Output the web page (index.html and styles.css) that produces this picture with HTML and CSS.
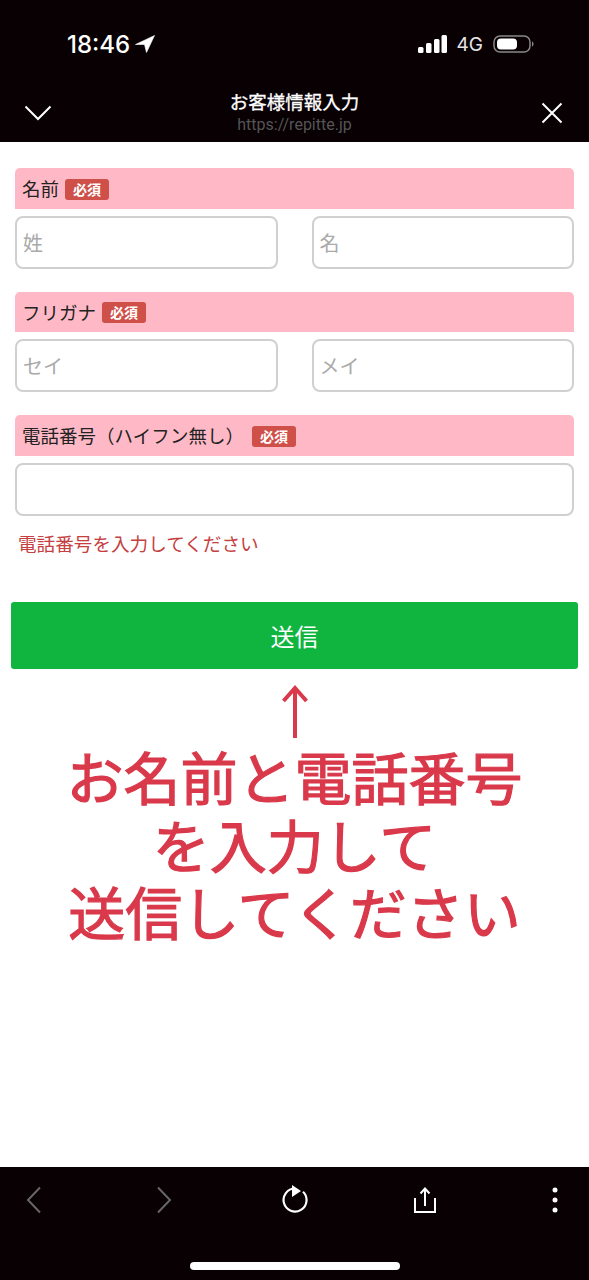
FILE: index.html
```html
<!DOCTYPE html>
<html lang="ja">
<head>
  <meta charset="UTF-8">
  <meta name="viewport" content="width=device-width, initial-scale=1.0">
  <title>お客様情報入力</title>
  <link rel="stylesheet" href="styles.css">
</head>
<body>
  <div class="app">
    <header class="top">
      <div class="status">
        <div class="clock">
          <span>18:46</span>
          <svg width="20" height="18" viewBox="0 0 20 18"><path d="M19.500.5.500 9.500h9l2 8z" fill="#fff" stroke="#fff" stroke-width=".6"/></svg>
        </div>
        <div class="indicators">
          <svg width="29" height="18" viewBox="0 0 29 18" fill="#fff">
            <rect x="0" y="12" width="5.500" height="6" rx="1.500"/>
            <rect x="8" y="8" width="5.500" height="10" rx="1.500"/>
            <rect x="16" y="4" width="5.500" height="14" rx="1.500"/>
            <rect x="23.500" y="0" width="5.500" height="18" rx="1.500"/>
          </svg>
          <span class="network">4G</span>
          <svg width="42" height="18" viewBox="0 0 42 18">
            <rect x="1" y="1" width="36" height="16" rx="6" fill="none" stroke="#888" stroke-width="1.500"/>
            <rect x="4" y="3.500" width="20" height="11" rx="4" fill="#fff"/>
            <path d="M39 6.500c2 .5 2 4.500 0 5z" fill="#888"/>
          </svg>
        </div>
      </div>
      <div class="nav">
        <svg class="nav-down" width="28" height="16" viewBox="0 0 28 16"><path d="M1.500 1.500 14 14 26.500 1.500" fill="none" stroke="#fff" stroke-width="2"/></svg>
        <div class="nav-title">
          <div class="title">お客様情報入力</div>
          <div class="url">https://repitte.jp</div>
        </div>
        <svg class="nav-close" width="22" height="22" viewBox="0 0 22 22"><path d="M1.500 1.500l19 19M20.500 1.500l-19 19" fill="none" stroke="#fff" stroke-width="2"/></svg>
      </div>
    </header>

    <main class="content">
      <form class="form">
        <div class="field">
          <div class="label">名前<span class="req">必須</span></div>
          <div class="two">
            <input class="input" type="text" placeholder="姓">
            <input class="input" type="text" placeholder="名">
          </div>
        </div>
        <div class="field">
          <div class="label">フリガナ<span class="req">必須</span></div>
          <div class="two">
            <input class="input" type="text" placeholder="セイ">
            <input class="input" type="text" placeholder="メイ">
          </div>
        </div>
        <div class="field">
          <div class="label">電話番号（ハイフン無し）<span class="req req-far">必須</span></div>
          <input class="input" type="tel">
          <p class="error">電話番号を入力してください</p>
        </div>
        <button class="send" type="button">送信</button>
      </form>

      <div class="note">
        <svg class="note-arrow" width="30" height="54" viewBox="0 0 30 54"><path d="M15 53V3M3.500 16 15 3l11.500 13" fill="none" stroke="#d9394a" stroke-width="4"/></svg>
        <p class="note-text">お名前と電話番号<br>を入力して<br>送信してください</p>
      </div>
    </main>

    <footer class="bottom">
      <div class="tools">
        <span class="tool"><svg width="16" height="28" viewBox="0 0 16 28"><path d="M14 1.500 2 14l12 12.500" fill="none" stroke="#666" stroke-width="2"/></svg></span>
        <span class="tool"><svg width="16" height="28" viewBox="0 0 16 28"><path d="M2 1.500 14 14 2 26.500" fill="none" stroke="#666" stroke-width="2"/></svg></span>
        <span class="tool"><svg width="26" height="30" viewBox="0 0 26 30">
          <path d="M13 3.500A11.500 11.500 0 1 0 21 6.700" fill="none" stroke="#fff" stroke-width="2.200"/>
          <path d="M10 0l9 6-9 6z" fill="#fff"/>
        </svg></span>
        <span class="tool"><svg width="24" height="26" viewBox="0 0 24 26">
          <path d="M2 11v14h20V11M12 19V2M7.500 6.500 12 1.500l4.500 5" fill="none" stroke="#fff" stroke-width="2"/>
        </svg></span>
        <span class="tool"><svg width="6" height="26" viewBox="0 0 6 26" fill="#fff">
          <circle cx="3" cy="3" r="2.500"/>
          <circle cx="3" cy="13" r="2.500"/>
          <circle cx="3" cy="23" r="2.500"/>
        </svg></span>
      </div>
      <div class="home-bar"></div>
    </footer>
  </div>
</body>
</html>
```

FILE: styles.css
```css
* {
  box-sizing: border-box;
}
body {
  margin: 0;
  font-family: "Noto Sans CJK JP", "Noto Sans", sans-serif;
  background: #fff;
  color: #222;
}
.app {
  display: flex;
  flex-direction: column;
  height: 1280px;
}

/* top bars */
.top {
  height: 142px;
  background: #080003;
  color: #fff;
}
.status {
  height: 86px;
  padding: 30px 54px 0 67px;
  display: flex;
  justify-content: space-between;
  align-items: flex-start;
}
.clock {
  display: flex;
  align-items: center;
  gap: 5px;
  height: 28px;
  font-family: Inter, sans-serif;
  font-size: 24px;
  font-weight: 500;
}
.indicators {
  display: flex;
  align-items: center;
  gap: 10px;
  height: 28px;
}
.network {
  font-family: Inter, sans-serif;
  font-size: 19px;
  color: #e4e4e4;
}
.nav {
  display: flex;
  justify-content: space-between;
  align-items: flex-start;
  padding: 0 26px 0 24px;
  position: relative;
}
.nav-down {
  margin-top: 19px;
}
.nav-close {
  margin-top: 16px;
}
.nav-title {
  position: absolute;
  left: 0;
  right: 0;
  top: 2px;
  text-align: center;
}
.title {
  font-size: 18.500px;
  -webkit-text-stroke: .3px #fff;
  line-height: 26px;
}
.url {
  font-family: Roboto, sans-serif;
  font-size: 16px;
  line-height: 22px;
  color: #555;
}

/* form */
.content {
  flex: 1;
}
.form {
  padding: 26px 11px 0;
}
.field {
  padding: 0 4px;
  margin-bottom: 23px;
}
.label {
  height: 40.500px;
  padding: 0 7px;
  display: flex;
  align-items: center;
  background: #ffb9c6;
  border-radius: 5px 5px 0 0;
  font-size: 18.500px;
  color: #222;
}
.req {
  margin: 2px 0 0 6px;
  padding: 0 8px;
  height: 21px;
  line-height: 21px;
  background: #cf4f49;
  border-radius: 3px;
  font-size: 14px;
  font-weight: 700;
  color: #fff;
}
.req-far {
  margin-left: 8px;
}
.two {
  display: flex;
  gap: 34px;
}
.input {
  display: block;
  width: 100%;
  min-width: 0;
  height: 53px;
  margin-top: 7px;
  padding: 0 6px;
  border: 2px solid #d0d0d0;
  border-radius: 8px;
  background: #fff;
  font-family: inherit;
  font-size: 20px;
}
.input::placeholder {
  color: #aaa;
}
.error {
  margin: 15px 0 0 3px;
  font-size: 18.600px;
  line-height: 24px;
  color: #c5403f;
}
.send {
  display: block;
  width: 100%;
  height: 67px;
  margin-top: 47.500px;
  border: none;
  border-radius: 3px;
  background: #0fb53f;
  color: #fff;
  font-family: inherit;
  font-size: 24px;
}

/* red note under the button */
.note {
  text-align: center;
  color: #d9394a;
}
.note-arrow {
  display: block;
  margin: 16px auto 0;
}
.note-text {
  margin: 3px 0 0;
  font-size: 57px;
  line-height: 67.500px;
  font-weight: 400;
  -webkit-text-stroke: 1.200px #d9394a;
  white-space: nowrap;
}

/* bottom bar */
.bottom {
  height: 113px;
  background: #080003;
  display: flex;
  flex-direction: column;
  align-items: center;
}
.tools {
  width: 100%;
  height: 66px;
  padding: 0 4px;
  display: flex;
  justify-content: space-between;
  align-items: center;
}
.tool {
  width: 60px;
  display: flex;
  justify-content: center;
}
.home-bar {
  width: 210px;
  height: 8px;
  margin-top: 29px;
  border-radius: 4px;
  background: #fff;
}
```
